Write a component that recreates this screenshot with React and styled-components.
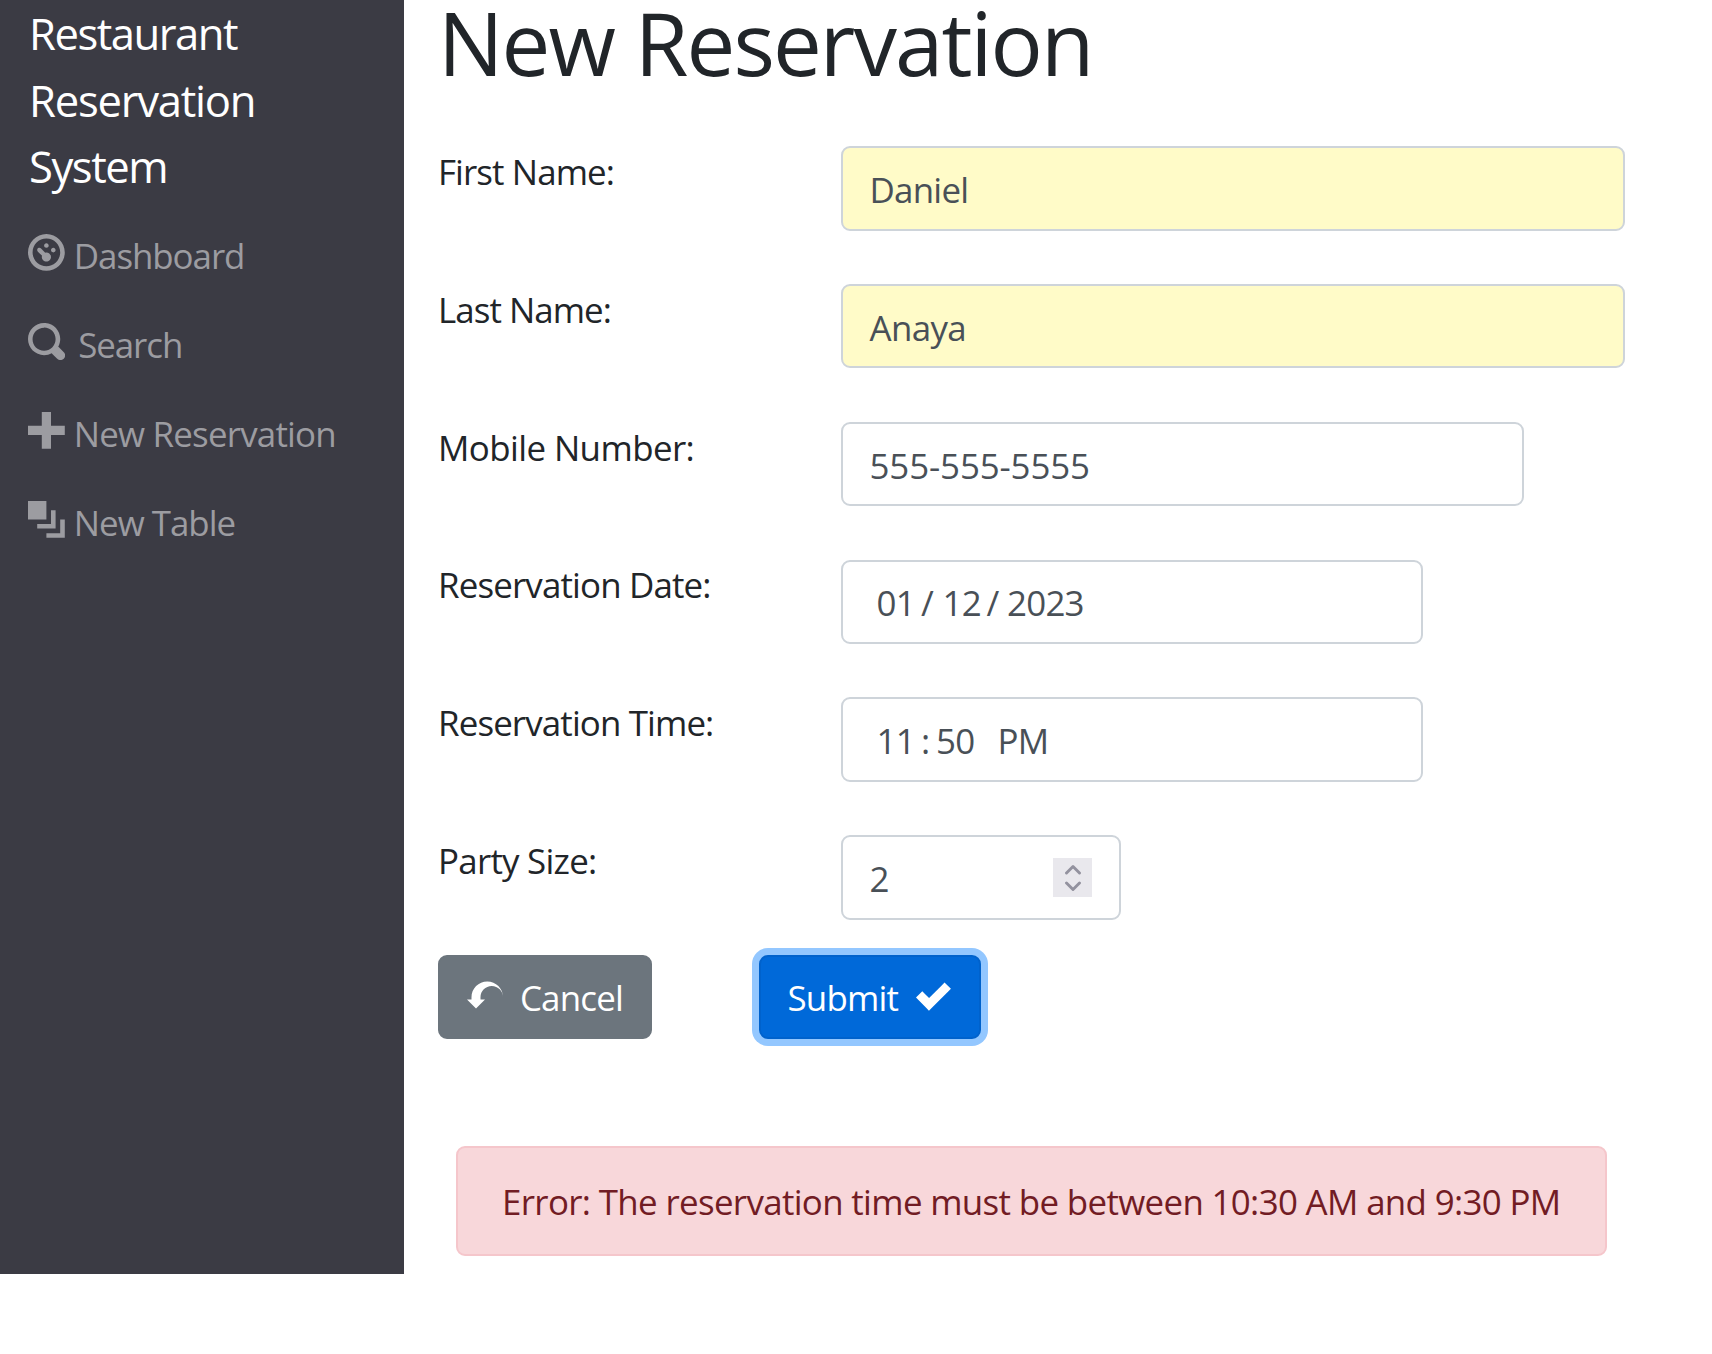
import React from "react";
import styled, { createGlobalStyle } from "styled-components";

const GlobalStyle = createGlobalStyle`
  *, *::before, *::after { box-sizing: border-box; }
  body {
    margin: 0;
    background: #fff;
    color: #212529;
    font-family: "Open Sans", "Noto Sans", sans-serif;
    font-size: 34.9px;
    line-height: 54px;
  }
`;

const Layout = styled.div`
  display: flex;
  align-items: flex-start;
  width: 1712px;
  height: 1354px;
`;

const Sidebar = styled.nav`
  flex: none;
  width: 404px;
  height: 1274px;
  padding-left: 28px;
  background: #3b3b44;
`;

const Brand = styled.div`
  display: flex;
  flex-direction: column;
  padding: 0 0 11px 1px;
  color: #fff;
  font-size: 43.6px;
  line-height: 66.6px;
`;

const Tracked = styled.span`
  letter-spacing: ${(p) => p.$tracking}px;
  white-space: nowrap;
`;

const NavItem = styled.a`
  display: flex;
  align-items: center;
  gap: ${(p) => p.$gap || 9}px;
  height: 89px;
  color: #9c9ca1;

  ${Tracked} {
    padding-top: 1px;
  }
`;

const IconSvg = styled.svg`
  flex: none;
  width: ${(p) => p.$size}px;
  height: ${(p) => p.$size}px;
  margin-bottom: ${(p) => p.$lift}px;
  fill: currentColor;
`;

const Main = styled.main`
  flex: 1;
  padding-left: 34px;
`;

const Title = styled.h1`
  margin: 0 0 61.8px;
  font-size: 87px;
  font-weight: 400;
  line-height: 84.5px;
`;

const Row = styled.div`
  display: grid;
  grid-template-columns: 403px auto;
  justify-content: start;
  height: 84.4px;
  margin-bottom: ${(p) => (p.$last ? 35.4 : 53.4)}px;
`;

const Label = styled.label`
  margin: -1.3px 0 0;
`;

const Field = styled.div`
  display: flex;
  align-items: center;
  justify-content: space-between;
  width: ${(p) => p.$width}px;
  height: 84.4px;
  padding: 0 27px 0 ${(p) => (p.$segmented ? 33.5 : 26.5)}px;
  border: 2px solid #ced4da;
  border-radius: 9px;
  background: ${(p) => (p.$filled ? "#fffbc8" : "#fff")};
  color: #495057;
`;

const Value = styled.span`
  padding-top: 3px;
  letter-spacing: ${(p) => p.$tracking || 0}px;
`;

const Segments = styled.div`
  display: flex;
  padding-top: 3px;
  letter-spacing: -0.75px;
`;

const Segment = styled.span`
  width: ${(p) => p.$width}px;
  white-space: nowrap;
`;

const Stepper = styled.div`
  display: flex;
  flex-direction: column;
  align-items: center;
  justify-content: center;
  gap: 6.5px;
  width: 39px;
  height: 39px;
  margin-top: 1px;
  background: #e9e8ed;
`;

const Chevron = styled.svg`
  width: 18px;
  height: 11px;
  fill: none;
  stroke: #93929f;
  stroke-width: 2.9;
  stroke-linecap: round;
  stroke-linejoin: round;
`;

const Actions = styled.div`
  display: flex;
  gap: 107px;
`;

const Button = styled.button`
  display: flex;
  align-items: center;
  justify-content: space-between;
  width: ${(p) => p.$width}px;
  height: 84px;
  padding: 0 27px 0 26.5px;
  border: 2px solid ${(p) => (p.$primary ? "#0062cc" : "#6c757d")};
  border-radius: 9px;
  background: ${(p) => (p.$primary ? "#0069d9" : "#6c757d")};
  box-shadow: ${(p) => (p.$primary ? "0 0 0 7px #93c7ff" : "none")};
  color: #fff;
  font: inherit;

  ${Tracked} {
    padding-top: 1.5px;
  }
`;

const Alert = styled.div`
  width: 1151px;
  height: 110px;
  margin: 107px 0 0 18px;
  padding: 27px 0 0 44px;
  border: 2px solid #f5c6cb;
  border-radius: 9px;
  background: #f8d7da;
  color: #721c24;
`;

const PATHS = {
  dashboard:
    "M4 0c-2.2 0-4 1.8-4 4s1.8 4 4 4 4-1.8 4-4-1.8-4-4-4zm0 1c1.66 0 3 1.34 3 3s-1.34 3-3 3-3-1.34-3-3 1.34-3 3-3zm0 1c-.28 0-.5.22-.5.5s.22.5.5.5.5-.22.5-.5-.22-.5-.5-.5zm-1.66 1a.5.5 0 0 0-.19.84l.91.91c-.02.08-.06.16-.06.25 0 .55.45 1 1 1s1-.45 1-1-.45-1-1-1c-.09 0-.17.04-.25.06l-.91-.91a.5.5 0 0 0-.44-.16.5.5 0 0 0-.06 0zm3.16 0c-.28 0-.5.22-.5.5s.22.5.5.5.5-.22.5-.5-.22-.5-.5-.5z",
  search:
    "M3.5 0c-1.93 0-3.5 1.57-3.5 3.5s1.57 3.5 3.5 3.5c.59 0 1.17-.14 1.66-.41a1 1 0 0 0 .13.13l1 1a1.02 1.02 0 1 0 1.44-1.44l-1-1a1 1 0 0 0-.16-.13c.27-.49.44-1.06.44-1.66 0-1.93-1.55-3.5-3.5-3.5zm0 1c1.39 0 2.5 1.11 2.5 2.5 0 .66-.24 1.27-.66 1.72-.01.01-.02.02-.03.03a1 1 0 0 0-.13.13c-.44.4-1.04.63-1.69.63-1.39 0-2.5-1.11-2.5-2.5s1.11-2.5 2.5-2.5z",
  plus: "M3 0v3h-3v2h3v3h2v-3h3v-2h-3v-3h-2z",
  layers: "M0 0v4h4v-4h-4zm5 2v3h-3v1h4v-4h-1zm2 2v3h-3v1h4v-4h-1z",
  undo: "M4.5 1c-1.93 0-3.5 1.57-3.5 3.5v.5h-1l2 2 2-2h-1v-.5c0-1.38 1.12-2.5 2.5-2.5s2.5 1.12 2.5 2.5c0-1.93-1.57-3.5-3.5-3.5z",
  check:
    "M6.41 1l-.69.72-2.78 2.78-.81-.78-.72-.72-1.41 1.41.72.72 1.5 1.5.69.72.72-.72 3.5-3.5.72-.72-1.44-1.41z",
};

function Icon({ name, size = 36.8, lift = 5 }) {
  return (
    <IconSvg viewBox="0 0 8 8" $size={size} $lift={lift} aria-hidden="true">
      <path d={PATHS[name]} />
    </IconSvg>
  );
}

const NAV = [
  { icon: "dashboard", text: "Dashboard", tracking: -1.05 },
  { icon: "search", text: "Search", tracking: -1.1, gap: 13.5 },
  { icon: "plus", text: "New Reservation", tracking: -0.8 },
  { icon: "layers", text: "New Table", tracking: -1 },
];

function FormRow({ label, tracking, last, children }) {
  return (
    <Row $last={last}>
      <Label>
        <Tracked $tracking={tracking}>{label}</Tracked>
      </Label>
      {children}
    </Row>
  );
}

export default function App() {
  return (
    <>
      <GlobalStyle />
      <Layout>
        <Sidebar>
          <Brand>
            <Tracked $tracking={-1.5}>Restaurant</Tracked>
            <Tracked $tracking={-1.25}>Reservation</Tracked>
            <Tracked $tracking={-1.45}>System</Tracked>
          </Brand>
          {NAV.map((item) => (
            <NavItem key={item.text} $gap={item.gap}>
              <Icon name={item.icon} />
              <Tracked $tracking={item.tracking}>{item.text}</Tracked>
            </NavItem>
          ))}
        </Sidebar>
        <Main>
          <Title>
            <Tracked $tracking={-1.92}>New Reservation</Tracked>
          </Title>
          <FormRow label="First Name:" tracking={-0.9}>
            <Field $width={784} $filled>
              <Value $tracking={-0.75}>Daniel</Value>
            </Field>
          </FormRow>
          <FormRow label="Last Name:" tracking={-0.95}>
            <Field $width={784} $filled>
              <Value $tracking={-0.65}>Anaya</Value>
            </Field>
          </FormRow>
          <FormRow label="Mobile Number:" tracking={-0.58}>
            <Field $width={683}>
              <Value $tracking={-0.13}>555-555-5555</Value>
            </Field>
          </FormRow>
          <FormRow label="Reservation Date:" tracking={-0.85}>
            <Field $width={582} $segmented>
              <Segments>
                <Segment $width={44.5}>01</Segment>
                <Segment $width={21.5}>/</Segment>
                <Segment $width={44}>12</Segment>
                <Segment $width={20.5}>/</Segment>
                <Segment $width={80}>2023</Segment>
              </Segments>
            </Field>
          </FormRow>
          <FormRow label="Reservation Time:" tracking={-0.87}>
            <Field $width={582} $segmented>
              <Segments>
                <Segment $width={44.5}>11</Segment>
                <Segment $width={15}>:</Segment>
                <Segment $width={61.5}>50</Segment>
                <Segment $width={56}>PM</Segment>
              </Segments>
            </Field>
          </FormRow>
          <FormRow label="Party Size:" tracking={-0.75} last>
            <Field $width={280}>
              <Value>2</Value>
              <Stepper>
                <Chevron viewBox="0 0 18 11">
                  <path d="M2.5 9 9 2.5 15.5 9" />
                </Chevron>
                <Chevron viewBox="0 0 18 11">
                  <path d="M2.5 2 9 8.5 15.5 2" />
                </Chevron>
              </Stepper>
            </Field>
          </FormRow>
          <Actions>
            <Button type="button" $width={214}>
              <Icon name="undo" size={36} lift={3} />
              <Tracked $tracking={-0.8}>Cancel</Tracked>
            </Button>
            <Button type="submit" $width={222} $primary>
              <Tracked $tracking={-0.8}>Submit</Tracked>
              <Icon name="check" size={35.6} lift={3} />
            </Button>
          </Actions>
          <Alert role="alert">
            <Tracked $tracking={-0.66}>
              Error: The reservation time must be between 10:30 AM and 9:30 PM
            </Tracked>
          </Alert>
        </Main>
      </Layout>
    </>
  );
}
